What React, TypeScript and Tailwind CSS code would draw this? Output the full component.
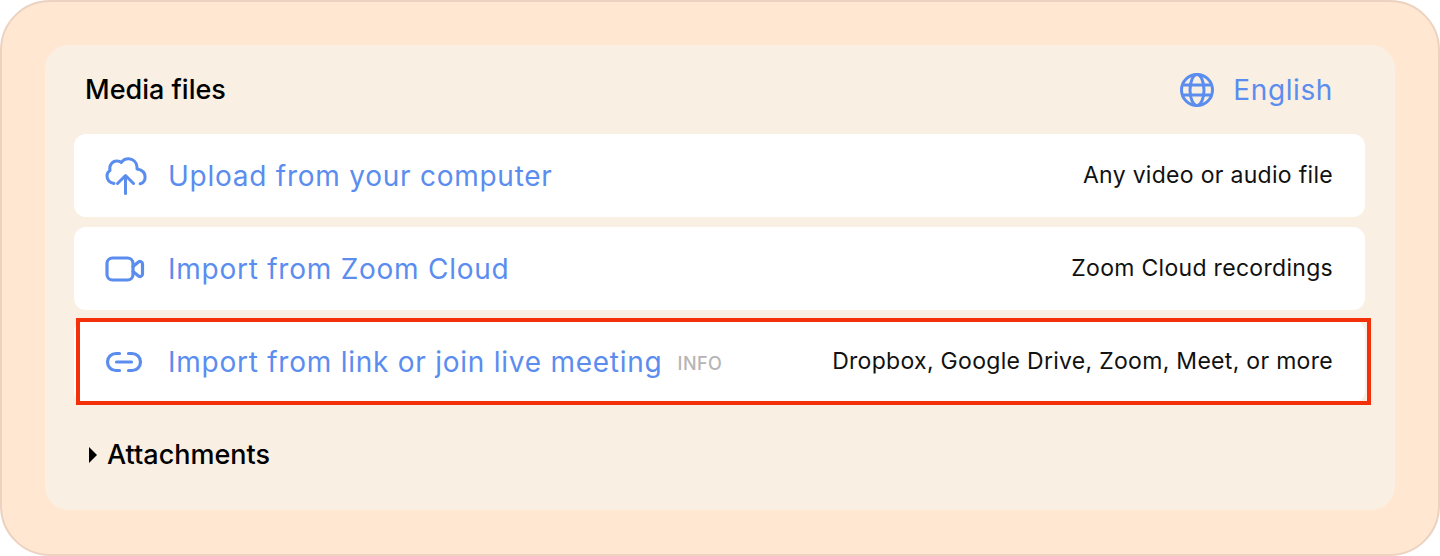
import React from "react";

const font = { };

function CloudIcon() {
  return (
    <svg width="42" height="38" viewBox="0 0 42 38" fill="none" stroke="#5b8def" strokeWidth="3" strokeLinecap="round" strokeLinejoin="round">
      <path d="M9 26.5C4.5 25.5 2 22.5 2 19c0-2.500 1.200-4.500 3-5.500C3.800 8.500 7.500 3.500 12.500 4c1.500.1 2.800.7 3.800 1.500C18 3 20.500 1.800 23.500 1.800c4.500 0 8.200 3.200 8.500 8 .1 1-.1 1.500.1 2.200 4.500.8 8 3.700 8 8.200 0 3.300-2 5.800-5 6.600" />
      <path d="M20.500 36.500V19.500" />
      <path d="M12.500 26.500l8-8 8 8" />
    </svg>
  );
}

function VideoIcon() {
  return (
    <svg width="40" height="26" viewBox="0 0 40 26" fill="none" stroke="#5b8def" strokeWidth="3.200" strokeLinecap="round" strokeLinejoin="round">
      <rect x="2" y="2" width="26" height="22" rx="5.500" />
      <path d="M28 10.500l5.500-4.500c1.500-1.200 4-.5 4 2v10c0 2.500-2.500 3.200-4 2L28 15.500" />
    </svg>
  );
}

function LinkIcon() {
  return (
    <svg width="38" height="22" viewBox="0 0 38 22" fill="none" stroke="#5b8def" strokeWidth="3.200" strokeLinecap="round">
      <path d="M14.500 2.500H11a8.500 8.500 0 0 0 0 17h3.500" />
      <path d="M23.500 2.500H27a8.500 8.500 0 0 1 0 17h-3.500" />
      <path d="M11.500 11h15" />
    </svg>
  );
}

function GlobeIcon() {
  return (
    <svg width="36" height="36" viewBox="0 0 36 36" fill="none" stroke="#5b8def" strokeWidth="3">
      <circle cx="18" cy="18" r="15.500" />
      <ellipse cx="18" cy="18" rx="7" ry="15.500" />
      <path d="M4 13h28M4 23h28" />
    </svg>
  );
}

function Row({ icon, title, note, info }: { icon: React.ReactNode; title: string; note: string; info?: boolean }) {
  return (
    <div className="flex h-[83px] items-center rounded-[12px] bg-white pr-[32px]">
      <div className="flex w-[94px] shrink-0 items-center pl-[31px]">{icon}</div>
      <span className="text-[28px] leading-none tracking-[0.75px] text-[#5b8def]">{title}</span>
      {info && <span className="ml-[15px] mt-[5px] text-[18px] font-medium leading-none tracking-[0.5px] text-[#b5b5b5]">INFO</span>}
      <span className="ml-auto text-[23px] leading-none tracking-[0.3px] text-[#111111]">{note}</span>
    </div>
  );
}

export default function App() {
  return (
    <div className="h-[556px] w-full overflow-hidden bg-white font-['Inter',sans-serif]">
      <div className="h-full rounded-[50px] border-2 border-[#ecd3c1] bg-[#ffe7d1] p-[43px]">
        <div className="flex h-[465px] flex-col rounded-[24px] bg-[#f9efe3] pl-[29px] pr-[30px]">
          <div className="flex h-[89px] shrink-0 items-center justify-between pl-[11px] pr-[32px]">
            <h1 className="text-[27px] font-medium leading-none text-black">Media files</h1>
            <div className="flex items-center gap-[18px]">
              <GlobeIcon />
              <span className="text-[28px] leading-none tracking-[0.6px] text-[#5b8def]">English</span>
            </div>
          </div>
          <div className="flex flex-col gap-[10px]">
            <Row icon={<CloudIcon />} title="Upload from your computer" note="Any video or audio file" />
            <Row icon={<VideoIcon />} title="Import from Zoom Cloud" note="Zoom Cloud recordings" />
            <div className="relative">
              <Row icon={<LinkIcon />} title="Import from link or join live meeting" note="Dropbox, Google Drive, Zoom, Meet, or more" info />
              <div className="absolute left-[2px] right-[-6px] top-[-2px] bottom-[-2px] border-[4px] border-[#f4300a]" />
            </div>
          </div>
          <div className="mt-[33px] flex items-center pl-[15px]">
            <svg width="8" height="16" viewBox="0 0 8 16" className="mr-[10px]">
              <path d="M0 0l8 8-8 8z" fill="#000000" />
            </svg>
            <span className="text-[27px] font-medium leading-[38px] text-black">Attachments</span>
          </div>
        </div>
      </div>
    </div>
  );
}
